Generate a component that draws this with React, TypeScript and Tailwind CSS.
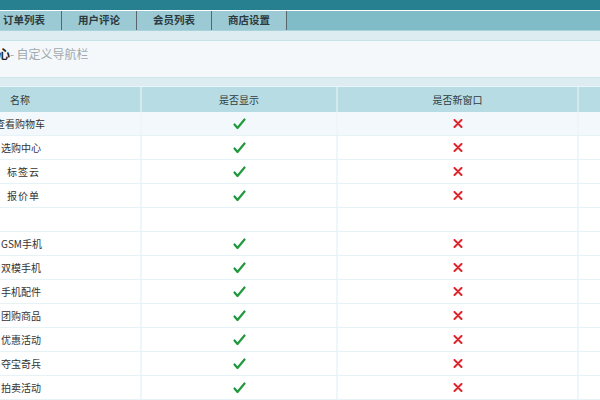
import React from "react";

type Row = { name: string; end: number; track?: boolean; hl?: boolean; empty?: boolean };

const rows: Row[] = [
  { name: "查看购物车", end: 45, hl: true },
  { name: "选购中心", end: 41 },
  { name: "标签云", end: 40, track: true },
  { name: "报价单", end: 40, track: true },
  { name: "", end: 41, empty: true },
  { name: "GSM手机", end: 42 },
  { name: "双模手机", end: 41 },
  { name: "手机配件", end: 41 },
  { name: "团购商品", end: 41 },
  { name: "优惠活动", end: 41 },
  { name: "夺宝奇兵", end: 41 },
  { name: "拍卖活动", end: 41 },
];

const Check = () => (
  <svg width="13" height="12" viewBox="0 0 13 12">
    <path d="M1.5 6.5 L4.5 10 L11.5 1.5" fill="none" stroke="#1f9a3c" strokeWidth="2.2" strokeLinecap="round" strokeLinejoin="round" />
  </svg>
);

const Cross = () => (
  <svg width="10" height="9" viewBox="0 0 10 9">
    <path d="M1.5 1 L8.5 8 M8.5 1 L1.5 8" fill="none" stroke="#e0262c" strokeWidth="2" strokeLinecap="round" />
  </svg>
);

const tabs = ["订单列表", "用户评论", "会员列表", "商店设置"];

export default function App() {
  return (
    <div
      className="w-[600px] h-[400px] overflow-hidden bg-white relative"
      style={{ fontFamily: '"Noto Sans CJK SC", "Noto Sans", sans-serif' }}
    >
      <div className="h-[10px] bg-[#27808f]" />
      <div className="h-px bg-white" />
      <div className="h-[19px] bg-[#7fbcc8] flex">
        <div className="flex ml-[-13px]">
          {tabs.map((t) => (
            <div
              key={t}
              className="w-[75px] h-full bg-[#9ccad4] border-r border-[#56666a] flex items-center justify-center text-[10.5px] font-bold text-[#2c3b40] leading-none"
            >
              {t}
            </div>
          ))}
        </div>
      </div>
      <div className="h-px bg-[#a9d3db]" />
      <div className="h-[9px] bg-[#dcecf0]" />
      <div className="h-px bg-[#c6e3ea]" />
      <div className="h-[36px] bg-[#f4f8fb] flex items-start pt-[7px]">
        <span className="ml-[-2px] text-[12px] font-bold text-[#222] leading-none">心</span>
        <span className="text-[12px] text-[#a0a9ae] leading-none">-&thinsp;自定义导航栏</span>
      </div>
      <div className="h-px bg-[#cde5eb]" />
      <div className="h-[8px] bg-[#dcecf0]" />
      <div className="h-px bg-[#eaf5f8]" />
      {/* header */}
      <div className="h-[25px] bg-[#b8dce4] flex text-[10px] text-[#2f3c40]">
        <div className="w-[140px] flex items-center pl-[10px]">名称</div>
        <div className="w-[2px] bg-[#d3e9ee]" />
        <div className="w-[194px] flex items-center justify-center">是否显示</div>
        <div className="w-[2px] bg-[#d3e9ee]" />
        <div className="w-[239px] flex items-center justify-center">是否新窗口</div>
        <div className="w-[2px] bg-[#d3e9ee]" />
        <div className="flex-1" />
      </div>
      {rows.map((r, i) => (
        <div
          key={i}
          className={`h-[24px] flex border-b border-[#e6f3f6] text-[10px] text-[#333] ${r.hl ? "bg-[#f2f8fb]" : "bg-white"}`}
        >
          <div className="w-[140px] flex items-center">
            <div className="flex justify-end whitespace-nowrap" style={{ width: r.end }}>
              <span className={r.track ? "tracking-[1px]" : ""}>{r.name}</span>
            </div>
          </div>
          <div className="w-[2px] bg-[#edf6f8]" />
          <div className="w-[194px] flex items-center justify-center">{r.empty ? null : <Check />}</div>
          <div className="w-[2px] bg-[#edf6f8]" />
          <div className="w-[239px] flex items-center justify-center">{r.empty ? null : <Cross />}</div>
          <div className="w-[2px] bg-[#edf6f8]" />
          <div className="flex-1" />
        </div>
      ))}
    </div>
  );
}
